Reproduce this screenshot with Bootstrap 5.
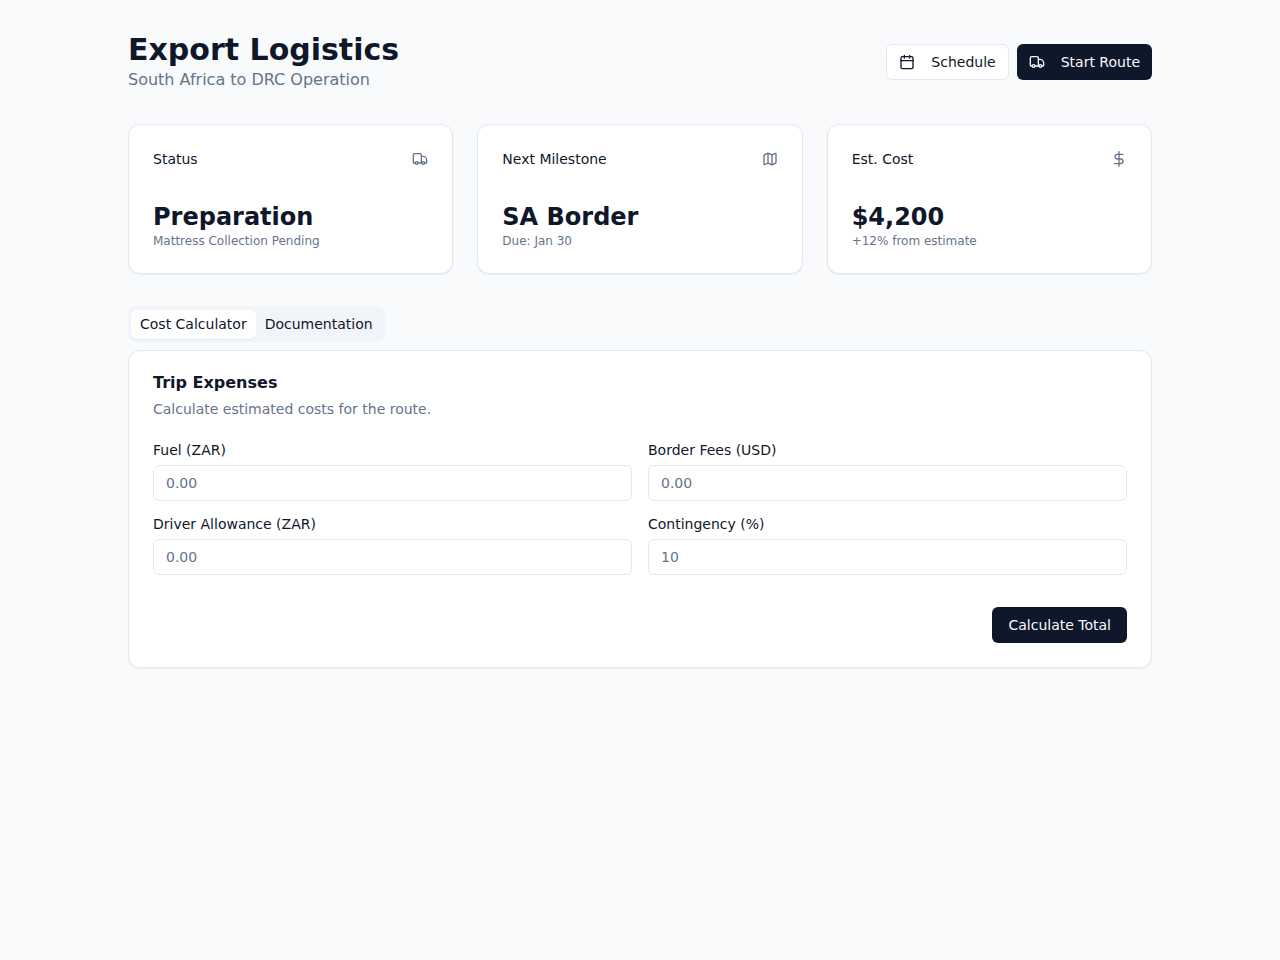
<!DOCTYPE html>
<html lang="en">
<head>
<meta charset="utf-8">
<meta name="viewport" content="width=device-width, initial-scale=1">
<title>Export Logistics</title>
<link href="https://cdn.jsdelivr.net/npm/bootstrap@5.3.0/dist/css/bootstrap.min.css" rel="stylesheet">
<style>
:root { --ink: #0f172a; --muted: #64748b; --line: #e2e8f0; }
body { font-family: "DejaVu Sans", sans-serif; font-size: 14px; line-height: 20px; color: var(--ink); background: #f8fafc; }
.page { max-width: 1088px; padding: 32px; }
h1 { font-size: 30px; line-height: 36px; font-weight: 700; }
.subtitle { font-size: 16px; line-height: 24px; color: var(--muted); }
.muted { color: var(--muted); }
.icon { width: 16px; height: 16px; flex: none; fill: none; stroke: currentColor; stroke-width: 2; stroke-linecap: round; stroke-linejoin: round; }
.btn { --bs-btn-font-size: 14px; --bs-btn-line-height: 20px; --bs-btn-border-radius: 6px; --bs-btn-padding-y: 8px; --bs-btn-padding-x: 16px; }
.btn-icon { --bs-btn-padding-x: 12px; }
.btn-ink { --bs-btn-border-width: 0; --bs-btn-color: #f8fafc; --bs-btn-bg: var(--ink); --bs-btn-hover-color: #f8fafc; --bs-btn-hover-bg: #1e293b; --bs-btn-active-color: #f8fafc; --bs-btn-active-bg: #1e293b; }
.btn-line { --bs-btn-padding-y: 7px; --bs-btn-color: var(--ink); --bs-btn-bg: #fff; --bs-btn-border-color: var(--line); --bs-btn-hover-bg: #f1f5f9; --bs-btn-hover-border-color: var(--line); }
.card { --bs-card-border-color: var(--line); --bs-card-border-radius: 12px; --bs-card-color: var(--ink); box-shadow: 0 1px 2px rgba(15,23,42,.06); }
.stat-value { font-size: 24px; line-height: 32px; font-weight: 700; }
.stat-note { font-size: 12px; line-height: 16px; color: var(--muted); }
.tabs { background: #f1f5f9; border-radius: 8px; padding: 4px 3px 3px; }
.tabs .nav-link { padding: 3px 8px 4px; background: transparent; border: 1px solid transparent; border-radius: 6px; color: var(--ink); }
.tabs .nav-link.active { background: #fff; box-shadow: 0 1px 1px rgba(15,23,42,.06); }
h2 { font-size: 16px; line-height: 16px; font-weight: 600; }
.form-label { line-height: 14px; }
.form-control { font-size: 14px; line-height: 20px; padding: 7px 12px; border-color: var(--line); border-radius: 6px; }
.form-control::placeholder { color: var(--muted); }
</style>
</head>
<body>
<main class="page container-fluid">
  <header class="d-flex flex-wrap justify-content-between align-items-center gap-3 mb-4 pb-2">
    <div>
      <h1 class="mb-0">Export Logistics</h1>
      <p class="subtitle mb-0">South Africa to DRC Operation</p>
    </div>
    <div class="d-flex gap-2">
      <button type="button" class="btn btn-line btn-icon d-flex align-items-center gap-3"><svg class="icon" viewBox="0 0 24 24" aria-hidden="true"><path d="M8 2v4M16 2v4M3 10h18"/><rect x="3" y="4" width="18" height="18" rx="2"/></svg>Schedule</button>
      <button type="button" class="btn btn-ink btn-icon d-flex align-items-center gap-3"><svg class="icon" viewBox="0 0 24 24" aria-hidden="true"><use href="#truck"/></svg>Start Route</button>
    </div>
  </header>

  <section class="row row-cols-1 row-cols-md-3 g-4 mb-4 pb-2" aria-label="Overview">
    <div class="col"><div class="card p-4">
      <div class="d-flex justify-content-between align-items-center mb-4 pb-2"><span>Status</span><svg class="icon muted" viewBox="0 0 24 24" aria-hidden="true"><g id="truck"><path d="M14 18V6a2 2 0 0 0-2-2H4a2 2 0 0 0-2 2v11a1 1 0 0 0 1 1h2M15 18H9M19 18h2a1 1 0 0 0 1-1v-3.300C22 10.500 19.500 8 16.300 8H14"/><circle cx="17" cy="18" r="2"/><circle cx="7" cy="18" r="2"/></g></svg></div>
      <div class="stat-value">Preparation</div>
      <div class="stat-note">Mattress Collection Pending</div>
    </div></div>
    <div class="col"><div class="card p-4">
      <div class="d-flex justify-content-between align-items-center mb-4 pb-2"><span>Next Milestone</span><svg class="icon muted" viewBox="0 0 24 24" aria-hidden="true"><path d="M14.106 5.553a2 2 0 0 0 1.788 0l3.659-1.83A1 1 0 0 1 21 4.619v12.764a1 1 0 0 1-.553.894l-4.553 2.277a2 2 0 0 1-1.788 0l-4.212-2.106a2 2 0 0 0-1.788 0l-3.659 1.83A1 1 0 0 1 3 19.381V6.618a1 1 0 0 1 .553-.894l4.553-2.277a2 2 0 0 1 1.788 0zM15 5.764v15M9 3.236v15"/></svg></div>
      <div class="stat-value">SA Border</div>
      <div class="stat-note">Due: Jan 30</div>
    </div></div>
    <div class="col"><div class="card p-4">
      <div class="d-flex justify-content-between align-items-center mb-4 pb-2"><span>Est. Cost</span><svg class="icon muted" viewBox="0 0 24 24" aria-hidden="true"><path d="M12 1v22M18 5H9.500a3.500 3.500 0 0 0 0 7h5a3.500 3.500 0 0 1 0 7H5"/></svg></div>
      <div class="stat-value">$4,200</div>
      <div class="stat-note">+12% from estimate</div>
    </div></div>
  </section>

  <div class="tabs nav d-inline-flex mb-2 align-top" role="tablist">
    <button type="button" class="nav-link active" role="tab" id="cost-tab" data-bs-toggle="tab" data-bs-target="#cost" aria-controls="cost" aria-selected="true">Cost Calculator</button>
    <button type="button" class="nav-link" role="tab" id="docs-tab" data-bs-toggle="tab" data-bs-target="#docs" aria-controls="docs" aria-selected="false">Documentation</button>
  </div>
  <div class="tab-content">
    <div class="tab-pane active" id="cost" role="tabpanel" aria-labelledby="cost-tab">
      <form class="card p-4">
        <h2 class="mb-2">Trip Expenses</h2>
        <p class="muted mb-4">Calculate estimated costs for the route.</p>
        <div class="row row-cols-1 row-cols-sm-2 g-3 mb-4 pb-2">
          <div class="col"><label class="form-label d-block mb-2" for="fuel">Fuel (ZAR)</label><input class="form-control" id="fuel" type="text" inputmode="decimal" placeholder="0.00"></div>
          <div class="col"><label class="form-label d-block mb-2" for="fees">Border Fees (USD)</label><input class="form-control" id="fees" type="text" inputmode="decimal" placeholder="0.00"></div>
          <div class="col"><label class="form-label d-block mb-2" for="driver">Driver Allowance (ZAR)</label><input class="form-control" id="driver" type="text" inputmode="decimal" placeholder="0.00"></div>
          <div class="col"><label class="form-label d-block mb-2" for="contingency">Contingency (%)</label><input class="form-control" id="contingency" type="text" inputmode="decimal" placeholder="10"></div>
        </div>
        <button type="button" class="btn btn-ink align-self-end">Calculate Total</button>
      </form>
    </div>
    <div class="tab-pane" id="docs" role="tabpanel" aria-labelledby="docs-tab"></div>
  </div>
</main>
<script src="https://cdn.jsdelivr.net/npm/bootstrap@5.3.0/dist/js/bootstrap.bundle.min.js"></script>
</body>
</html>
